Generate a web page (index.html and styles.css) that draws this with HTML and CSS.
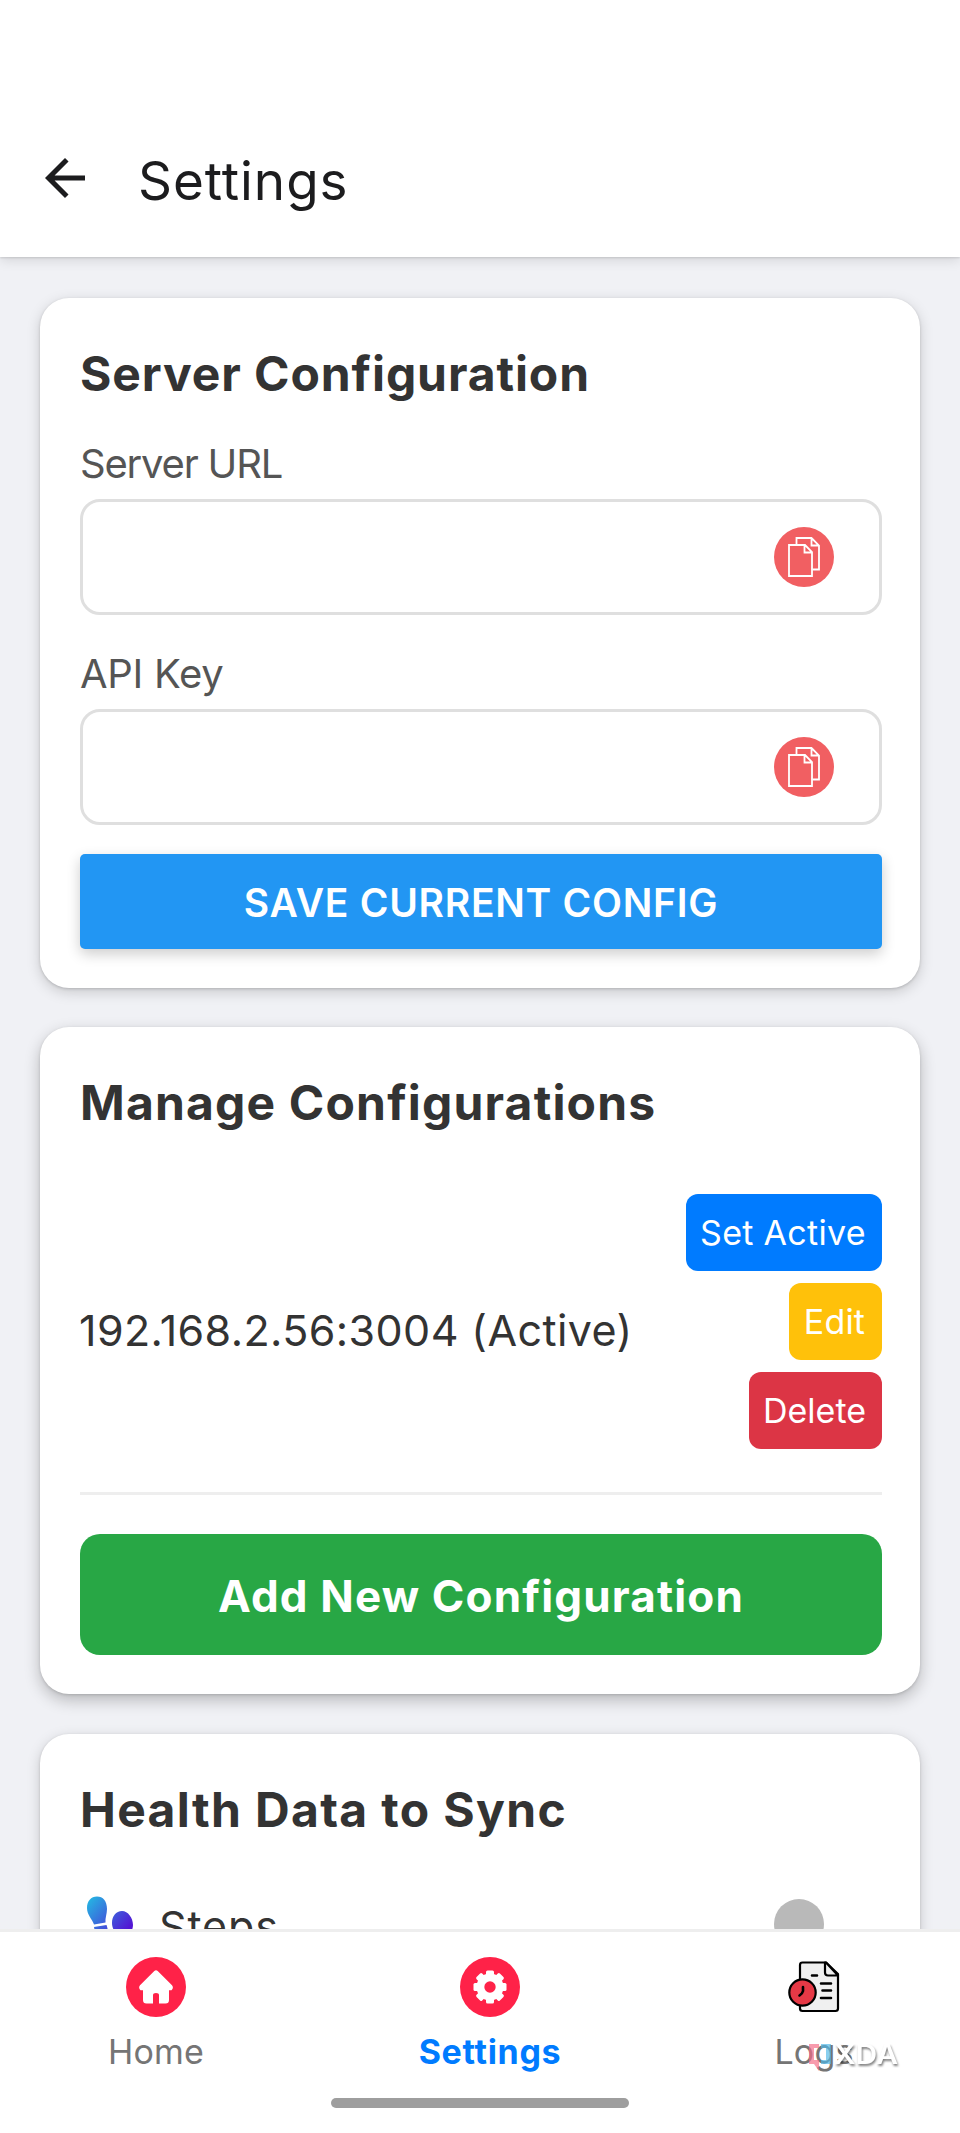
FILE: index.html
```html
<!DOCTYPE html>
<html lang="en">
<head>
<meta charset="utf-8">
<title>Settings</title>
<link rel="stylesheet" href="styles.css">
</head>
<body>
<div class="app">
  <header class="topbar">
    <svg class="back" viewBox="0 0 24 24"><path fill="#1c1c1e" d="M20 11H7.83l5.59-5.59L12 4l-8 8 8 8 1.41-1.41L7.83 13H20z"/></svg>
    <h1 class="screen-title">Settings</h1>
  </header>

  <main class="content">
    <section class="card">
      <h2 class="card-title t-server">Server Configuration</h2>
      <div class="label l-url">Server URL</div>
      <div class="input">
        <svg class="copy" viewBox="0 0 60 60"><circle cx="30" cy="30" r="30" fill="#f15f62"/><g fill="none" stroke="#fff" stroke-width="1.8"><path d="M22.5 17.5V11H37.5L45 18.5V42.5H38.5M37.5 11V18.5H45"/><path d="M15 18H31L38 25V49H15zM30.5 18V25.5H38"/></g></svg>
      </div>
      <div class="label l-key">API Key</div>
      <div class="input">
        <svg class="copy" viewBox="0 0 60 60"><circle cx="30" cy="30" r="30" fill="#f15f62"/><g fill="none" stroke="#fff" stroke-width="1.8"><path d="M22.5 17.5V11H37.5L45 18.5V42.5H38.5M37.5 11V18.5H45"/><path d="M15 18H31L38 25V49H15zM30.5 18V25.5H38"/></g></svg>
      </div>
      <button class="save">SAVE CURRENT CONFIG</button>
    </section>

    <section class="card manage">
      <h2 class="card-title t-manage">Manage Configurations</h2>
      <div class="config-row">
        <div class="config-name">192.168.2.56:3004 (Active)</div>
        <div class="actions">
          <button class="action set">Set Active</button>
          <button class="action edit">Edit</button>
          <button class="action delete">Delete</button>
        </div>
      </div>
      <button class="add">Add New Configuration</button>
    </section>

    <section class="card health">
      <h2 class="card-title t-health">Health Data to Sync</h2>
      <div class="metric">
        <svg class="steps-icon" viewBox="0 0 60 60">
          <defs><linearGradient id="feet" gradientUnits="userSpaceOnUse" x1="8" y1="4" x2="46" y2="36"><stop offset="0" stop-color="#25b4e2"/><stop offset="1" stop-color="#5315d4"/></linearGradient></defs>
          <g fill="url(#feet)"><path d="M17 .5C23 .5 27 5 27 13C27 18 25 22 25.5 26.5L14 28.5C12 23 7 19 7 12C7 5 11 .5 17 .5z"/><path d="M14 31L26.5 29C29 36 28 42 22 42C17 42 15 37 14 31z"/><path d="M42 15C48 15 53 22 53 29C53 35 49 38 47 43L35 41C36 36 32 33 32 27C32 20 36 15 42 15z"/></g>
        </svg>
        <span class="metric-name">Steps</span>
        <span class="switch"><span class="thumb"></span></span>
      </div>
    </section>
  </main>

  <nav class="tabs">
    <a class="tab">
      <svg class="tab-icon" viewBox="0 0 60 60"><circle cx="30" cy="30" r="30" fill="#ff2248"/><path fill="#fff" d="M28.3 14Q30 12.3 31.7 14L46 28.3Q48 31 45.5 33.3H43V43Q43 46.5 39.5 46.5H33V38Q33 36 30 36Q27 36 27 38V46.5H20.5Q17 46.5 17 43V33.3H14.5Q12 31 14 28.3z"/></svg>
      <span class="tab-label home">Home</span>
    </a>
    <a class="tab">
      <svg class="tab-icon" viewBox="0 0 60 60"><circle cx="30" cy="30" r="30" fill="#ff2248"/><g fill="#fff"><circle cx="30" cy="30" r="13.5"/><g id="teeth"><rect x="26" y="13.5" width="8" height="33" rx="1.5"/><rect x="13.5" y="26" width="33" height="8" rx="1.5"/></g><use href="#teeth" transform="rotate(45 30 30)"/></g><circle cx="30" cy="30" r="5.7" fill="#ff2248"/></svg>
      <span class="tab-label settings">Settings</span>
    </a>
    <a class="tab">
      <svg class="tab-icon" viewBox="-1 0 60 60"><g stroke="#000" stroke-width="2.2" stroke-linecap="round" stroke-linejoin="round"><path fill="#f0f0f0" d="M17.5 5.5H41L53 17V51.5Q53 54 50.5 54H17.5Q15 54 15 51.5V8Q15 5.5 17.5 5.5z"/><path fill="#f0f0f0" d="M40 5.5V15.5Q40 18.5 43 18.5H53L41 5.5z"/><circle cx="17.5" cy="35.5" r="13.2" fill="#e63946"/><path fill="none" stroke-width="2.6" d="M27 18.5H32M36 26.5H46M37.5 33.5H46M36 41H46M18 30V34Q17.5 36.5 14.5 38.5"/></g></svg>
      <span class="tab-label logs">Logs</span>
      <svg class="watermark" viewBox="0 0 94 32"><path fill="#f46b86" fill-opacity=".68" d="M2 2H12V6H7V18H12V29L7 22H2z"/><path fill="#4fb8e8" fill-opacity=".68" d="M14 2H24V22H14V18H19V6H14z"/><text class="mark" x="27" y="22" textLength="64" lengthAdjust="spacingAndGlyphs">XDA</text></svg>
    </a>
  </nav>
  <footer class="gesture"><span class="pill"></span></footer>
</div>
</body>
</html>
```
FILE: styles.css
```css
* { box-sizing: border-box; }
body { margin: 0; background: #fff; font-family: Inter, "Open Sans", sans-serif; color: #333; }
h1, h2 { margin: 0; }
button { display: block; border: 0; padding: 0; margin: 0; font: inherit; color: #fff; white-space: nowrap; }
.app { width: 960px; height: 2133px; display: flex; flex-direction: column; overflow: hidden; }

.topbar { position: relative; z-index: 1; flex: none; height: 257px; padding: 103px 35px 0; display: flex; align-items: center; gap: 43px; background: #fff; box-shadow: 0 1px 2px rgba(0,0,0,.12), 0 3px 12px rgba(0,0,0,.12); }
.back { width: 60px; height: 60px; margin-top: -4px; }
.screen-title { padding-top: 2px; font-size: 53px; font-weight: 400; color: #1c1c1e; line-height: 70px; letter-spacing: .95px; }

.content { flex: 1; min-height: 0; overflow: hidden; padding: 41px 40px 0; display: flex; flex-direction: column; gap: 39px; background: #f0f1f5; }
.card { flex: none; background: #fff; border-radius: 29px; padding: 41px 38px 39px 40px; box-shadow: 0 1px 3px rgba(0,0,0,.16), 0 4px 14px rgba(0,0,0,.17); }
.manage { box-shadow: 0 1px 3px rgba(0,0,0,.14), 0 6px 16px rgba(0,0,0,.24); }
.health { margin-top: 1px; }
.card-title { font-size: 48px; font-weight: 700; line-height: 70px; white-space: nowrap; }
.t-server { letter-spacing: .9px; }
.t-manage { letter-spacing: 1.17px; }
.t-health { letter-spacing: 1.35px; }

.label { margin: 30px 0 10px; font-size: 40px; line-height: 50px; color: #555; }
.input + .label { margin-top: 34px; }
.l-url { letter-spacing: -1.2px; }
.l-key { letter-spacing: -.3px; }
.input { height: 116px; border: 3px solid #dfdfdf; border-radius: 20px; display: flex; align-items: center; justify-content: flex-end; padding-right: 45px; }
.copy { width: 60px; height: 60px; }
.save { width: 100%; height: 95px; margin-top: 29px; padding-top: 2px; border-radius: 5px; background: #2296f3; font-size: 39px; font-weight: 600; letter-spacing: .72px; box-shadow: 0 5px 14px rgba(0,0,0,.2); }

.config-row { margin-top: 56px; padding-bottom: 43px; border-bottom: 3px solid #eee; display: flex; justify-content: space-between; align-items: center; }
.config-name { margin-left: -1px; padding-top: 16px; font-size: 43px; line-height: 54px; letter-spacing: .4px; white-space: nowrap; }
.actions { display: flex; flex-direction: column; align-items: flex-end; gap: 12px; }
.action { height: 77px; border-radius: 12px; font-size: 34px; padding: 0 2px 0 0; letter-spacing: .2px; }
.set { width: 196px; background: #007bff; letter-spacing: .3px; }
.edit { width: 93px; background: #ffc10a; }
.delete { width: 133px; background: #dc3545; letter-spacing: 0; }
.add { width: 100%; height: 121px; margin-top: 39px; padding-top: 2px; border-radius: 20px; background: #28a745; font-size: 44px; font-weight: 700; letter-spacing: 1.15px; }

.metric { margin-top: 51px; height: 60px; display: flex; align-items: center; }
.steps-icon { width: 60px; height: 60px; }
.metric-name { flex: 1; margin-left: 19px; font-size: 43px; letter-spacing: .9px; }
.switch { width: 108px; }
.thumb { display: block; width: 50px; height: 50px; margin-top: -4px; border-radius: 50%; background: #b9b9b9; }

.tabs { flex: none; height: 159px; border-top: 3px solid #eee; background: #fff; display: grid; grid-template-columns: 312px 356px 292px; }
.tab { position: relative; display: flex; flex-direction: column; align-items: center; padding-top: 25px; }
.tab-icon { width: 60px; height: 60px; }
.tab-label { margin-top: 15px; font-size: 34px; line-height: 40px; color: #757575; letter-spacing: .2px; }
.settings { color: #007bff; font-weight: 700; letter-spacing: .7px; }
.watermark { position: absolute; left: 139px; top: 110px; width: 94px; height: 32px; overflow: visible; }
.mark { font-family: Inter, sans-serif; font-size: 27px; font-weight: 600; fill: #fff; filter: drop-shadow(1px 2px 1px rgba(0,0,0,.5)); }

.gesture { flex: none; height: 45px; background: #fff; display: flex; justify-content: center; padding: 10px 0 0; }
.pill { width: 298px; height: 10px; border-radius: 5px; background: #9e9e9e; }
```
